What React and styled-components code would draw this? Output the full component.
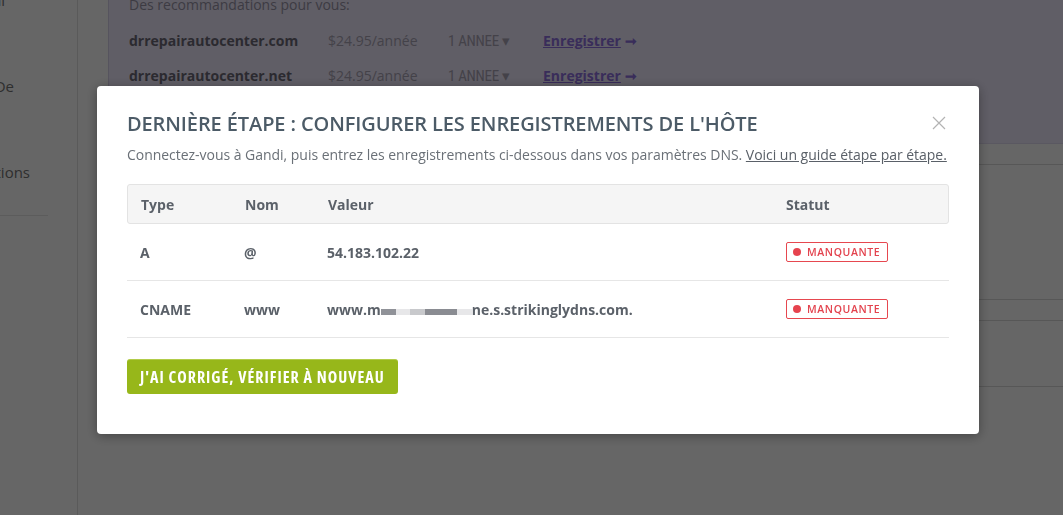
import React from 'react';
import styled, { createGlobalStyle } from 'styled-components';

const GlobalStyle = createGlobalStyle`
  html, body {
    margin: 0;
    padding: 0;
    background: #ffffff;
    font-family: "Open Sans", "Liberation Sans", sans-serif;
    overflow: hidden;
  }
  * { box-sizing: border-box; }
`;

const Page = styled.div`
  display: flex;
  width: 1063px;
  height: 515px;
  overflow: hidden;
`;

const Sidebar = styled.nav`
  width: 78px;
  flex-shrink: 0;
  border-right: 1px solid #e1e1e1;
  overflow: hidden;
  display: flex;
  flex-direction: column;
`;

const SideItem = styled.div`
  display: flex;
  justify-content: flex-end;
  height: 86px;
  padding-right: ${p => p.$pr}px;
  font-size: 15px;
  color: #757575;
  white-space: nowrap;
  line-height: 20px;
  margin-top: ${p => p.$mt || 0}px;
`;

const SideDivider = styled.hr`
  width: 48px;
  margin: -33px 0 0;
  border: 0;
  border-top: 1px solid #e6e6e6;
`;

const Main = styled.main`
  flex: 1;
  padding-left: 30px;
  display: flex;
  flex-direction: column;
`;

const Panel = styled.section`
  background: #f0ebff;
  border-left: 1px solid #d8d1ea;
  border-bottom: 1px solid #e2dcf2;
  height: 144px;
  padding: 0 0 0 20px;
`;

const PanelIntro = styled.p`
  margin: -5px 0 0;
  font-size: 14px;
  line-height: 20px;
  color: #9995a8;
`;

const RecoRow = styled.div`
  display: flex;
  align-items: center;
  height: 35px;
  margin-top: ${p => p.$mt}px;
  font-size: 14px;
`;

const Domain = styled.span`
  width: 199px;
  font-weight: 700;
  color: #6d6a78;
`;

const Price = styled.span`
  width: 120px;
  color: #aaa5b6;
`;

const Period = styled.span`
  width: 95px;
  color: #aaa5b6;
  font-family: "Liberation Sans Narrow", "Roboto", sans-serif;
  font-size: 15px;
  font-stretch: condensed;
  letter-spacing: -0.3px;
`;

const RegisterLink = styled.a`
  font-weight: 700;
  color: #8f70e0;
  text-decoration: ${p => (p.$plain ? 'none' : 'underline')};
`;

const Card = styled.section`
  margin-top: ${p => p.$mt}px;
  height: ${p => p.$h}px;
  border-top: 1px solid #dadada;
  border-bottom: 1px solid #dadada;
`;

const Overlay = styled.div`
  position: fixed;
  inset: 0;
  background: rgba(0, 0, 0, 0.6);
  padding: 86px 0 0 97px;
`;

const Modal = styled.div`
  position: relative;
  width: 882px;
  background: #fff;
  border-radius: 4px;
  box-shadow: 0 2px 12px rgba(0, 0, 0, 0.35);
  padding: 25px 30px 40px;
`;

const Close = styled.button`
  position: absolute;
  top: 30px;
  right: 33px;
  width: 14px;
  height: 14px;
  padding: 0;
  border: 0;
  background: none;
  cursor: pointer;
`;

const Title = styled.h2`
  margin: 0;
  font-size: 20px;
  line-height: 26px;
  font-weight: 600;
  color: #4c5b67;
  letter-spacing: -0.1px;
`;

const Subtitle = styled.p`
  margin: 7px 0 0;
  font-size: 14px;
  line-height: 21px;
  color: #6a7077;
  white-space: nowrap;
  letter-spacing: -0.03px;

  a {
    color: #5a6068;
    text-decoration: underline;
  }
`;

const Table = styled.div`
  margin-top: 19px;
`;

const Row = styled.div`
  display: grid;
  grid-template-columns: 104px 83px 1fr 175px;
  align-items: center;
  height: ${p => (p.$head ? 40 : 57)}px;
  font-size: 14px;
  font-weight: 700;
  color: #5b6169;
  background: ${p => (p.$head ? '#f5f5f5' : 'transparent')};
  border: ${p => (p.$head ? '1px solid #e3e3e3' : '0')};
  border-bottom: 1px solid ${p => (p.$head ? '#e3e3e3' : '#e6e6e6')};
  border-radius: ${p => (p.$head ? 3 : 0)}px;
`;

const Cell = styled.div`
  padding-left: 13px;
  white-space: nowrap;
  display: flex;
  align-items: center;
`;

const Blur = styled.span`
  display: inline-block;
  width: ${p => p.$w}px;
  height: 6px;
  margin-top: 5px;
  background: ${p => p.$c};
`;

const Badge = styled.span`
  display: inline-flex;
  align-items: center;
  gap: 6px;
  height: 20px;
  padding: 0 7px 0 6px;
  border: 1px solid #e6474f;
  border-radius: 2px;
  color: #e3434e;
  font-size: 10.5px;
  font-weight: 600;
  letter-spacing: 0.6px;
  margin-left: -1px;

  &::before {
    content: '';
    width: 8px;
    height: 8px;
    border-radius: 50%;
    background: #e6434e;
  }
`;

const Button = styled.button`
  margin-top: 21px;
  height: 35px;
  padding: 0 13px;
  border: 0;
  border-top: 1px solid #b2cc4a;
  border-radius: 3px;
  background: #97b71a;
  color: #fff;
  font-family: "Liberation Sans Narrow", "Open Sans", sans-serif;
  font-stretch: condensed;
  font-weight: 700;
  font-size: 16px;
  letter-spacing: 1px;
  cursor: pointer;
`;

const records = [
  { type: 'A', name: '@', value: '54.183.102.22' },
  { type: 'CNAME', name: 'www', value: 'cname' },
];

const blurs = [
  ['#909298', 15],
  ['#e7e7e9', 14],
  ['#c8c9cc', 15],
  ['#8a8c92', 32],
  ['#e7e7e9', 15],
];

const CnameValue = () => (
  <>
    www.m
    {blurs.map(([c, w], i) => (
      <Blur key={i} $c={c} $w={w} />
    ))}
    ne.s.strikinglydns.com.
  </>
);

const Recommendation = ({ domain }) => (
  <RecoRow $mt={domain.endsWith('.com') ? 8 : 0}>
    <Domain>{domain}</Domain>
    <Price>$24.95/année</Price>
    <Period>1 ANNEE ▾</Period>
    <RegisterLink>Enregistrer</RegisterLink>&nbsp;<RegisterLink as="span" $plain>➞</RegisterLink>
  </RecoRow>
);

export default function App() {
  return (
    <>
      <GlobalStyle />
      <Page>
        <Sidebar>
          <SideItem $pr={72} $mt={-10}>Général</SideItem>
          <SideItem $pr={63}>Nom De</SideItem>
          <SideItem $pr={47}>Applications</SideItem>
          <SideDivider />
        </Sidebar>
        <Main>
          <Panel>
            <PanelIntro>Des recommandations pour vous:</PanelIntro>
            <Recommendation domain="drrepairautocenter.com" />
            <Recommendation domain="drrepairautocenter.net" />
          </Panel>
          <Card $mt={20} $h={136} />
          <Card $mt={20} $h={67} />
        </Main>
      </Page>

      <Overlay>
        <Modal>
          <Close aria-label="Fermer">
            <svg width="14" height="14" viewBox="0 0 14 14">
              <path d="M1 1 L13 13 M13 1 L1 13" stroke="#b3b3b3" strokeWidth="1.2" />
            </svg>
          </Close>
          <Title>DERNIÈRE ÉTAPE : CONFIGURER LES ENREGISTREMENTS DE L'HÔTE</Title>
          <Subtitle>
            Connectez-vous à Gandi, puis entrez les enregistrements ci-dessous dans vos paramètres DNS.{' '}
            <a>Voici un guide étape par étape.</a>
          </Subtitle>
          <Table>
            <Row $head>
              <Cell>Type</Cell>
              <Cell>Nom</Cell>
              <Cell>Valeur</Cell>
              <Cell>Statut</Cell>
            </Row>
            {records.map(r => (
              <Row key={r.type}>
                <Cell>{r.type}</Cell>
                <Cell>{r.name}</Cell>
                <Cell>{r.value === 'cname' ? <CnameValue /> : r.value}</Cell>
                <Cell>
                  <Badge>MANQUANTE</Badge>
                </Cell>
              </Row>
            ))}
          </Table>
          <Button>J'AI CORRIGÉ, VÉRIFIER À NOUVEAU</Button>
        </Modal>
      </Overlay>
    </>
  );
}
